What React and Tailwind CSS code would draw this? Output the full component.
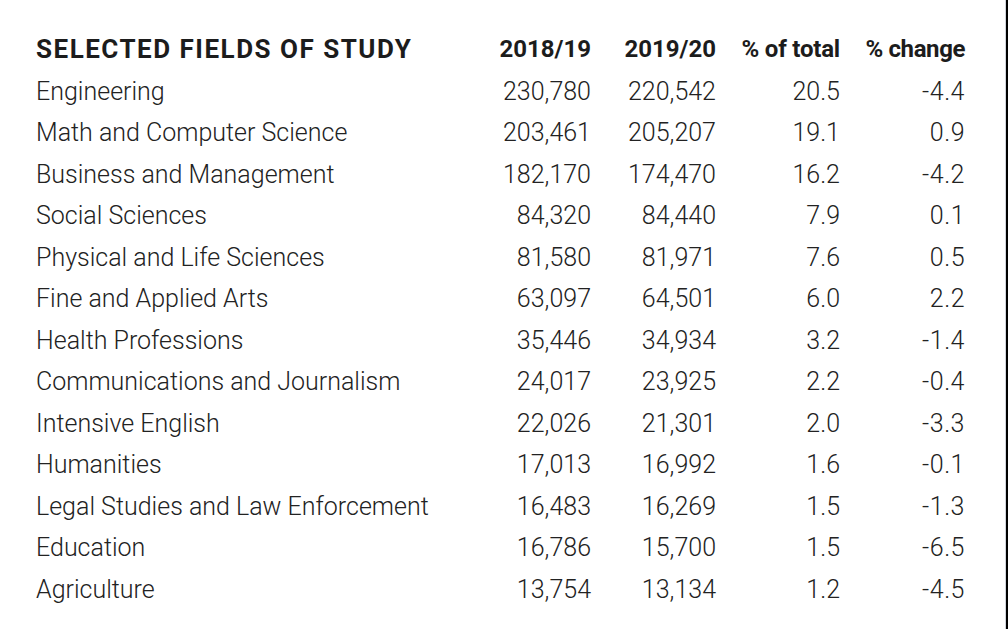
const rows = [
  ['Engineering', '230,780', '220,542', '20.5', '-4.4'],
  ['Math and Computer Science', '203,461', '205,207', '19.1', '0.9'],
  ['Business and Management', '182,170', '174,470', '16.2', '-4.2'],
  ['Social Sciences', '84,320', '84,440', '7.9', '0.1'],
  ['Physical and Life Sciences', '81,580', '81,971', '7.6', '0.5'],
  ['Fine and Applied Arts', '63,097', '64,501', '6.0', '2.2'],
  ['Health Professions', '35,446', '34,934', '3.2', '-1.4'],
  ['Communications and Journalism', '24,017', '23,925', '2.2', '-0.4'],
  ['Intensive English', '22,026', '21,301', '2.0', '-3.3'],
  ['Humanities', '17,013', '16,992', '1.6', '-0.1'],
  ['Legal Studies and Law Enforcement', '16,483', '16,269', '1.5', '-1.3'],
  ['Education', '16,786', '15,700', '1.5', '-6.5'],
  ['Agriculture', '13,754', '13,134', '1.2', '-4.5'],
];

export default function App() {
  return (
    <div className="flex h-[629px] w-[1008px] bg-white text-[#222]" style={{ fontFamily: 'Roboto, "Liberation Sans", sans-serif' }}>
      <div className="flex-1 pl-[36px] pt-[29px]">
        <div className="grid grid-cols-[430px_125px_125px_124px_125px] auto-rows-[41.5px] items-center leading-[41.5px]">
          <div className="text-[26px] font-bold tracking-[1.5px] text-[#1c1c1c]">SELECTED FIELDS OF STUDY</div>
          <div className="text-right text-[24px] font-bold text-[#1c1c1c]">2018/19</div>
          <div className="text-right text-[24px] font-bold text-[#1c1c1c]">2019/20</div>
          <div className="text-right text-[24px] font-bold tracking-[-0.2px] text-[#1c1c1c]">% of total</div>
          <div className="text-right text-[24px] font-bold tracking-[-0.4px] text-[#1c1c1c]">% change</div>
          {rows.map((r) => (
            <div key={r[0]} className="contents text-[25px] font-light">
              <div>{r[0]}</div>
              <div className="text-right">{r[1]}</div>
              <div className="text-right">{r[2]}</div>
              <div className="text-right">{r[3]}</div>
              <div className="text-right tracking-[0.5px]">{r[4]}</div>
            </div>
          ))}
        </div>
      </div>
      <div className="w-[3px] border-l border-gray-300 bg-black" />
    </div>
  );
}
